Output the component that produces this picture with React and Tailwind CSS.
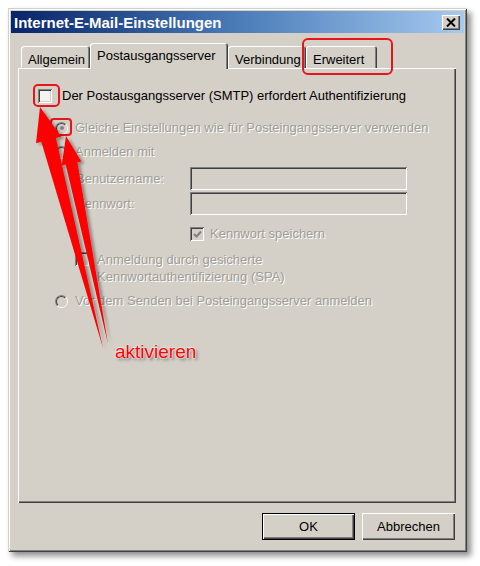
import React from "react";

const FONT = "font-['Liberation_Sans',Arial,sans-serif]";
const DIS = "text-[#a09d96] [text-shadow:1px_1px_0_#ffffff]";

function arrowPoints(tip, tail, headLen, headHalf, shaftHalf) {
  const dx = tail[0] - tip[0];
  const dy = tail[1] - tip[1];
  const L = Math.hypot(dx, dy);
  const ux = dx / L, uy = dy / L;
  const px = -uy, py = ux;
  const bx = tip[0] + ux * headLen, by = tip[1] + uy * headLen;
  const pts = [
    tip,
    [bx + px * headHalf, by + py * headHalf],
    [bx + px * shaftHalf, by + py * shaftHalf],
    tail,
    [bx - px * shaftHalf, by - py * shaftHalf],
    [bx - px * headHalf, by - py * headHalf],
  ];
  return pts.map((p) => p[0].toFixed(1) + "," + p[1].toFixed(1)).join(" ");
}

function Radio({ checked }) {
  return (
    <div className="w-[13px] h-[13px] rounded-full border border-t-[#808080] border-l-[#808080] border-b-white border-r-white flex items-center justify-center shrink-0">
      <div className="w-[11px] h-[11px] rounded-full border border-t-[#404040] border-l-[#404040] border-b-[#d4d0c8] border-r-[#d4d0c8] bg-[#d4d0c8] flex items-center justify-center">
        {checked && <div className="w-[4px] h-[4px] rounded-full bg-[#808080]" />}
      </div>
    </div>
  );
}

function Check({ enabled, checked }) {
  return (
    <div
      className={
        "w-[14px] h-[14px] shrink-0 flex items-center justify-center shadow-[inset_1px_1px_0_#808080,inset_-1px_-1px_0_#ffffff,inset_2px_2px_0_#404040,inset_-2px_-2px_0_#d4d0c8] " +
        (enabled ? "bg-[#f4f3f0]" : "bg-[#d4d0c8]")
      }
    >
      {checked && (
        <svg width="9" height="9" viewBox="0 0 9 9">
          <path d="M1 4 L3.5 6.5 L8 1.5" stroke="#808080" strokeWidth="2" fill="none" />
        </svg>
      )}
    </div>
  );
}

function Input() {
  return (
    <div className="w-[217px] h-[23px] bg-[#d4d0c8] shadow-[inset_1px_1px_0_#808080,inset_-1px_-1px_0_#ffffff,inset_2px_2px_0_#404040,inset_-2px_-2px_0_#d4d0c8]" />
  );
}

function Tab({ label, w, active }) {
  return (
    <div
      className={
        "bg-[#d4d0c8] rounded-t-[3px] shadow-[inset_1px_1px_0_#ffffff,inset_-1px_0_0_#404040,inset_-2px_0_0_#808080] flex text-black text-[13px] shrink-0 " +
        (active
          ? "h-[26px] -mb-px relative z-10 pl-[7px] pt-[3px]"
          : "h-[22px] pl-[7px] pt-[4px]")
      }
      style={{ width: w }}
    >
      {label}
    </div>
  );
}

function Button({ label, def }) {
  return (
    <div
      className={
        "w-[93px] h-[27px] bg-[#d4d0c8] flex items-center justify-center text-[13px] text-black " +
        (def
          ? "border border-black shadow-[inset_1px_1px_0_#ffffff,inset_-1px_-1px_0_#404040,inset_-2px_-2px_0_#808080]"
          : "shadow-[inset_1px_1px_0_#ffffff,inset_-1px_-1px_0_#404040,inset_-2px_-2px_0_#808080]")
      }
    >
      {label}
    </div>
  );
}

export default function App() {
  return (
    <div className={"relative w-[480px] h-[566px] bg-white overflow-hidden " + FONT}>
      <div className="pt-[8px] pl-[8px]">
        <div className="w-[459px] h-[544px] bg-[#d4d0c8] p-[3px] flex flex-col shadow-[inset_1px_1px_0_#d4d0c8,inset_-1px_-1px_0_#404040,inset_2px_2px_0_#ffffff,inset_-2px_-2px_0_#808080,4px_4px_6px_rgba(0,0,0,0.45)]">
          {/* title bar */}
          <div className="h-[22px] shrink-0 flex items-center justify-between pl-[3px] pr-[4px] bg-gradient-to-r from-[#0a246a] via-[#4a7cb8] to-[#a6caf0]">
            <span className="text-white font-bold text-[15px] leading-none">Internet-E-Mail-Einstellungen</span>
            <div className="w-[18px] h-[15px] bg-[#d4d0c8] flex items-center justify-center shadow-[inset_1px_1px_0_#ffffff,inset_-1px_-1px_0_#404040,inset_-2px_-2px_0_#808080]">
              <svg width="10" height="9" viewBox="0 0 10 9">
                <path d="M1 0.5 L9 8.5 M9 0.5 L1 8.5" stroke="#000" strokeWidth="2" />
              </svg>
            </div>
          </div>

          {/* body */}
          <div className="flex-1 flex flex-col pl-[7px] pr-[8px] pt-[10px]">
            <div className="flex items-end h-[25px] pl-[3px] shrink-0">
              <Tab label="Allgemein" w={69} />
              <Tab label="Postausgangsserver" w={138} active />
              <Tab label="Verbindung" w={78} />
              <Tab label="Erweitert" w={71} />
            </div>

            <div className="h-[435px] shrink-0 flex flex-col pl-[20px] pt-[20px] text-[13px] shadow-[inset_1px_1px_0_#ffffff,inset_-1px_-1px_0_#404040,inset_-2px_-2px_0_#808080]">
              <div className="h-[16px] flex items-center">
                <Check enabled />
                <span className="ml-[10px] text-black">Der Postausgangsserver (SMTP) erfordert Authentifizierung</span>
              </div>

              <div className="mt-[16px] h-[16px] flex items-center pl-[17px]">
                <Radio checked />
                <span className={"ml-[7px] " + DIS}>Gleiche Einstellungen wie für Posteingangsserver verwenden</span>
              </div>

              <div className="mt-[8px] h-[16px] flex items-center pl-[17px]">
                <Radio />
                <span className={"ml-[7px] " + DIS}>Anmelden mit</span>
              </div>

              <div className="mt-[7px] h-[23px] flex items-center pl-[38px]">
                <span className={"w-[114px] " + DIS}>Benutzername:</span>
                <Input />
              </div>

              <div className="mt-[2px] h-[23px] flex items-center pl-[38px]">
                <span className={"w-[114px] " + DIS}>Kennwort:</span>
                <Input />
              </div>

              <div className="mt-[11px] h-[16px] flex items-center pl-[152px]">
                <Check checked />
                <span className={"ml-[6px] " + DIS}>Kennwort speichern</span>
              </div>

              <div className="mt-[9px] flex items-start pl-[37px]">
                <div className="mt-[1px]">
                  <Check />
                </div>
                <span className={"ml-[8px] leading-[17px] " + DIS}>
                  Anmeldung durch gesicherte
                  <br />
                  Kennwortauthentifizierung (SPA)
                </span>
              </div>

              <div className="mt-[8px] h-[16px] flex items-center pl-[17px]">
                <Radio />
                <span className={"ml-[7px] " + DIS}>Vor dem Senden bei Posteingangsserver anmelden</span>
              </div>
            </div>

            <div className="mt-[10px] flex justify-end gap-[7px] pr-[1px]">
              <Button label="OK" def />
              <Button label="Abbrechen" />
            </div>
          </div>
        </div>
      </div>

      {/* annotations */}
      <div className="absolute left-[33px] top-[84px] w-[27px] h-[23px] border-2 border-[#e8141b] rounded-[5px]" />
      <div className="absolute left-[50px] top-[118px] w-[22px] h-[18px] border-2 border-[#e8141b] rounded-[4px]" />
      <div className="absolute left-[302px] top-[38px] w-[91px] h-[37px] border-2 border-[#e8141b] rounded-[6px]" />

      <svg className="absolute left-0 top-0 pointer-events-none" width="480" height="566" viewBox="0 0 480 566">
        <defs>
          <filter id="sh" x="-50%" y="-50%" width="200%" height="200%">
            <feDropShadow dx="3" dy="2" stdDeviation="1.5" floodColor="#000" floodOpacity="0.35" />
          </filter>
        </defs>
        <g filter="url(#sh)" fill="#ff0000">
          <polygon points={arrowPoints([40, 107], [103, 348], 34, 13, 7.5)} />
          <polygon points={arrowPoints([66, 136], [108, 344], 28, 10, 6)} />
        </g>
      </svg>

      <div className="absolute left-[115px] top-[340px] text-[19px] leading-[24px] text-[#ff0000] [text-shadow:0_0_2px_#ffffff,0_0_2px_#ffffff,2px_2px_3px_rgba(0,0,0,0.45)]">
        aktivieren
      </div>
    </div>
  );
}
